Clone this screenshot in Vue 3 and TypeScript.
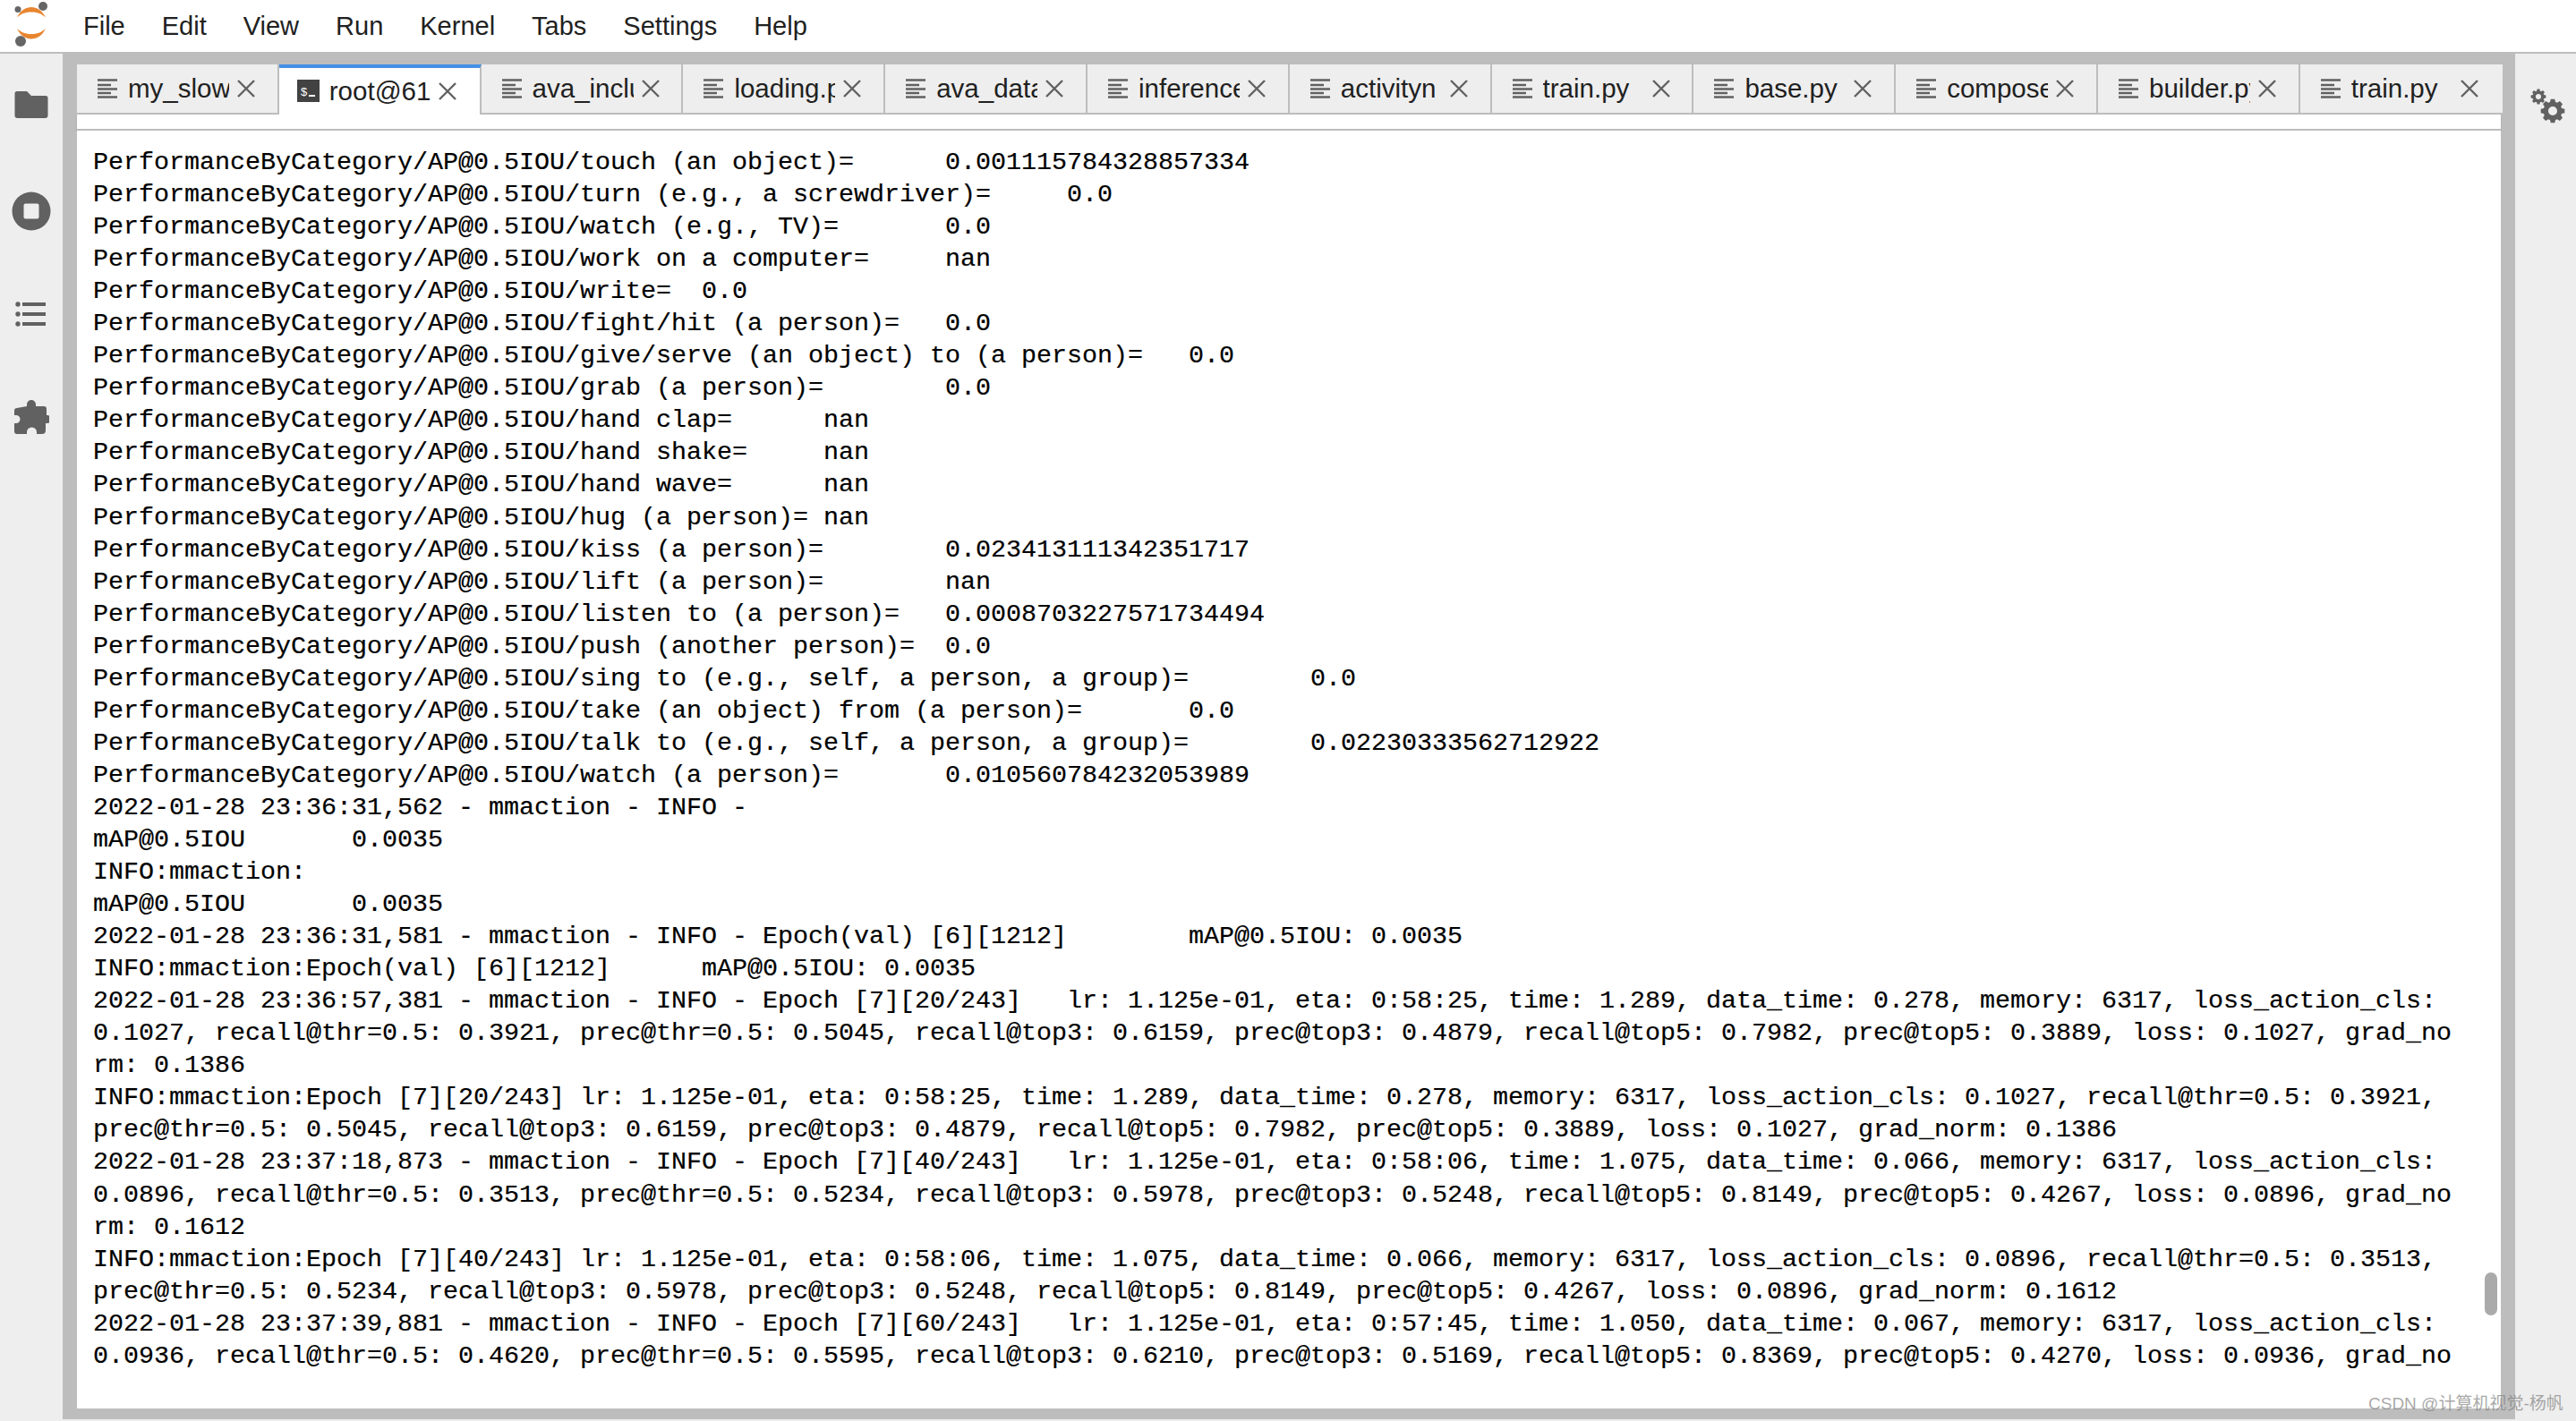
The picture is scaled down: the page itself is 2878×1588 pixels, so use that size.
<script setup lang="ts">
const menus: string[] = ['File', 'Edit', 'View', 'Run', 'Kernel', 'Tabs', 'Settings', 'Help']
const tabs: { label: string; terminal?: boolean }[] = [
  { label: 'my_slow' },
  { label: 'root@61d', terminal: true },
  { label: 'ava_include' },
  { label: 'loading.py' },
  { label: 'ava_dataset' },
  { label: 'inference.py' },
  { label: 'activityn' },
  { label: 'train.py' },
  { label: 'base.py' },
  { label: 'compose.py' },
  { label: 'builder.py' },
  { label: 'train.py' },
]

function gear(cx: number, cy: number, outer: number, inner: number, hole: number): string {
  const teeth = 8
  const pts: string[] = []
  for (let i = 0; i < teeth; i++) {
    const a = (i * Math.PI * 2) / teeth
    const s = Math.PI / teeth
    const at = (r: number, d: number): string =>
      `${(cx + r * Math.cos(a + d)).toFixed(2)} ${(cy + r * Math.sin(a + d)).toFixed(2)}`
    pts.push(at(inner, -s * 0.75), at(outer, -s * 0.42), at(outer, s * 0.42), at(inner, s * 0.75))
  }
  const ring = `M${cx - hole} ${cy}a${hole} ${hole} 0 1 0 ${hole * 2} 0a${hole} ${hole} 0 1 0 ${-hole * 2} 0Z`
  return `M${pts.join('L')}Z${ring}`
}
const smallGear = gear(9, 9, 8.5, 6.5, 3)
const bigGear = gear(25, 25, 13.5, 10.5, 5)

const p = 'PerformanceByCategory/AP@0.5IOU/'
const lines: string[] = [
  p + 'touch (an object)=\t0.001115784328857334',
  p + 'turn (e.g., a screwdriver)=\t0.0',
  p + 'watch (e.g., TV)=\t0.0',
  p + 'work on a computer=\tnan',
  p + 'write=\t0.0',
  p + 'fight/hit (a person)=\t0.0',
  p + 'give/serve (an object) to (a person)=\t0.0',
  p + 'grab (a person)=\t0.0',
  p + 'hand clap=\tnan',
  p + 'hand shake=\tnan',
  p + 'hand wave=\tnan',
  p + 'hug (a person)=\tnan',
  p + 'kiss (a person)=\t0.023413111342351717',
  p + 'lift (a person)=\tnan',
  p + 'listen to (a person)=\t0.0008703227571734494',
  p + 'push (another person)=\t0.0',
  p + 'sing to (e.g., self, a person, a group)=\t0.0',
  p + 'take (an object) from (a person)=\t0.0',
  p + 'talk to (e.g., self, a person, a group)=\t0.02230333562712922',
  p + 'watch (a person)=\t0.010560784232053989',
  '2022-01-28 23:36:31,562 - mmaction - INFO - ',
  'mAP@0.5IOU\t 0.0035',
  'INFO:mmaction:',
  'mAP@0.5IOU\t 0.0035',
  '2022-01-28 23:36:31,581 - mmaction - INFO - Epoch(val) [6][1212]\tmAP@0.5IOU: 0.0035',
  'INFO:mmaction:Epoch(val) [6][1212]\tmAP@0.5IOU: 0.0035',
  '2022-01-28 23:36:57,381 - mmaction - INFO - Epoch [7][20/243]\tlr: 1.125e-01, eta: 0:58:25, time: 1.289, data_time: 0.278, memory: 6317, loss_action_cls:',
  '0.1027, recall@thr=0.5: 0.3921, prec@thr=0.5: 0.5045, recall@top3: 0.6159, prec@top3: 0.4879, recall@top5: 0.7982, prec@top5: 0.3889, loss: 0.1027, grad_no',
  'rm: 0.1386',
  'INFO:mmaction:Epoch [7][20/243] lr: 1.125e-01, eta: 0:58:25, time: 1.289, data_time: 0.278, memory: 6317, loss_action_cls: 0.1027, recall@thr=0.5: 0.3921,',
  'prec@thr=0.5: 0.5045, recall@top3: 0.6159, prec@top3: 0.4879, recall@top5: 0.7982, prec@top5: 0.3889, loss: 0.1027, grad_norm: 0.1386',
  '2022-01-28 23:37:18,873 - mmaction - INFO - Epoch [7][40/243]\tlr: 1.125e-01, eta: 0:58:06, time: 1.075, data_time: 0.066, memory: 6317, loss_action_cls:',
  '0.0896, recall@thr=0.5: 0.3513, prec@thr=0.5: 0.5234, recall@top3: 0.5978, prec@top3: 0.5248, recall@top5: 0.8149, prec@top5: 0.4267, loss: 0.0896, grad_no',
  'rm: 0.1612',
  'INFO:mmaction:Epoch [7][40/243] lr: 1.125e-01, eta: 0:58:06, time: 1.075, data_time: 0.066, memory: 6317, loss_action_cls: 0.0896, recall@thr=0.5: 0.3513,',
  'prec@thr=0.5: 0.5234, recall@top3: 0.5978, prec@top3: 0.5248, recall@top5: 0.8149, prec@top5: 0.4267, loss: 0.0896, grad_norm: 0.1612',
  '2022-01-28 23:37:39,881 - mmaction - INFO - Epoch [7][60/243]\tlr: 1.125e-01, eta: 0:57:45, time: 1.050, data_time: 0.067, memory: 6317, loss_action_cls:',
  '0.0936, recall@thr=0.5: 0.4620, prec@thr=0.5: 0.5595, recall@top3: 0.6210, prec@top3: 0.5169, recall@top5: 0.8369, prec@top5: 0.4270, loss: 0.0936, grad_no',
]
</script>

<template>
  <div class="app">
    <header class="menubar">
      <svg class="logo" width="70" height="58" viewBox="0 0 70 58">
        <path d="M19 19.500C23 11.500 29 8 35 8s12 3.500 16 11.500C46 15 41 13.500 35 13.500S24 15 19 19.500Z" fill="#e8852f" />
        <path d="M19 32C23 40 29 43.500 35 43.500S47 40 51 32C46 36.500 41 38 35 38S24 36.500 19 32Z" fill="#e8852f" />
        <circle cx="20" cy="10.500" r="3.500" fill="#666" />
        <circle cx="48" cy="7" r="5" fill="#666" />
        <circle cx="23" cy="46" r="6" fill="#666" />
      </svg>
      <nav class="menus">
        <span v-for="m in menus" :key="m" class="menu">{{ m }}</span>
      </nav>
    </header>

    <div class="main">
      <aside class="side left">
        <svg class="ic folder" width="38" height="32" viewBox="0 0 38 32">
          <path d="M3 1h11l5 5h16a2.500 2.500 0 0 1 2.500 2.500V28a3 3 0 0 1-3 3H3.500a3 3 0 0 1-3-3V3.500A2.500 2.500 0 0 1 3 1Z" fill="#616161" />
        </svg>
        <svg class="ic stop" width="44" height="44" viewBox="0 0 44 44">
          <circle cx="22" cy="22" r="21.500" fill="#616161" />
          <rect x="13.500" y="13.500" width="17" height="17" rx="2" fill="#eee" />
        </svg>
        <svg class="ic list" width="36" height="28" viewBox="0 0 36 28">
          <circle cx="3" cy="3" r="2.700" fill="#616161" />
          <circle cx="3" cy="14" r="2.700" fill="#616161" />
          <circle cx="3" cy="25" r="2.700" fill="#616161" />
          <rect x="8" y="1" width="26" height="4" fill="#616161" />
          <rect x="8" y="12" width="26" height="4" fill="#616161" />
          <rect x="8" y="23" width="26" height="4" fill="#616161" />
        </svg>
        <svg class="ic puzzle" width="40" height="40" viewBox="0 0 40 40">
          <path d="M15 8V6a5 5 0 0 1 10 0v2h9a3 3 0 0 1 3 3v7h-1h2a4.500 4.500 0 0 1 0 9h-2v8a4 4 0 0 1-4 4h-6v-2a5 5 0 0 0-11 0v2H4a3 3 0 0 1-3-3v-9h2a4.500 4.500 0 0 0 0-9H1v-5a3 3 0 0 1 3-3Z" fill="#616161" />
        </svg>
      </aside>

      <section class="center">
        <div class="dock">
          <div class="tabbar">
            <div v-for="(t, i) in tabs" :key="i" class="tab" :class="{ active: t.terminal }">
              <svg v-if="t.terminal" class="tab-icon" width="25" height="25" viewBox="0 0 25 25">
                <rect width="25" height="25" fill="#424242" />
                <path d="M13 18h7" stroke="#fff" stroke-width="2" />
                <text x="4" y="18" font-size="13" fill="#fff" font-family="Liberation Sans, sans-serif">$</text>
              </svg>
              <svg v-else class="tab-icon" width="24" height="24" viewBox="0 0 24 24">
                <path d="M1 2.500h22M1 8h15M1 12.500h22M1 17h15M1 21.500h22" stroke="#616161" stroke-width="2.400" fill="none" />
              </svg>
              <span class="label">{{ t.label }}</span>
              <svg class="close" width="22" height="22" viewBox="0 0 22 22">
                <path d="M2 2l18 18M20 2L2 20" stroke="#616161" stroke-width="2.400" fill="none" />
              </svg>
            </div>
          </div>
          <div class="toolbar"></div>
          <div class="term">
            <div v-for="(l, i) in lines" :key="i" class="line">{{ l }}</div>
            <div class="thumb"></div>
          </div>
        </div>
      </section>

      <aside class="side right">
        <svg class="gears" width="40" height="40" viewBox="0 0 40 40">
          <path :d="smallGear" fill="#616161" fill-rule="evenodd" />
          <path :d="bigGear" fill="#616161" fill-rule="evenodd" />
        </svg>
      </aside>
    </div>
    <div class="status"></div>
    <div class="mark">CSDN @计算机视觉-杨帆</div>
  </div>
</template>

<style>
html, body { margin: 0; padding: 0; background: #eee; }
</style>

<style scoped>
.app {
  position: relative;
  width: 2878px;
  height: 1588px;
  display: flex;
  flex-direction: column;
  overflow: hidden;
  font-family: "Liberation Sans", Arial, sans-serif;
}
.menubar {
  height: 58px;
  flex: none;
  display: flex;
  align-items: center;
  background: #fff;
}
.logo { flex: none; }
.menus { display: flex; margin-left: 23px; }
.menu {
  font-size: 29px;
  color: #212121;
  margin-right: 41px;
  line-height: 58px;
}
.main {
  flex: 1;
  min-height: 0;
  display: flex;
  border-top: 2px solid #bdbdbd;
}
.side {
  flex: none;
  background: #eee;
  position: relative;
}
.left {
  width: 70px;
  display: flex;
  flex-direction: column;
  align-items: center;
}
.ic { display: block; flex: none; }
.folder { margin-top: 41px; margin-left: -1px; }
.stop { margin-top: 81px; }
.list { margin-top: 79px; margin-left: -1px; }
.puzzle { margin-top: 81px; margin-left: -1px; }
.right { width: 68px; }
.gears { display: block; margin: 39px 0 0 17px; }
.center {
  flex: 1;
  min-width: 0;
  background: #bdbdbd;
  padding: 12px 16px 12px 16px;
  display: flex;
}
.dock {
  flex: 1;
  min-width: 0;
  display: flex;
  flex-direction: column;
  background: #fff;
}
.tabbar {
  height: 56px;
  flex: none;
  display: flex;
  background: #eee;
}
.tab {
  width: 225.8px;
  box-sizing: border-box;
  flex: none;
  display: flex;
  align-items: center;
  padding-left: 22px;
  background: #eee;
  border-right: 2px solid #bdbdbd;
  border-bottom: 2px solid #bdbdbd;
}
.tab:last-child { border-right: 0; }
.tab.active {
  background: #fff;
  border-top: 4px solid #4490e6;
  border-bottom: 0;
  padding-left: 20px;
}
.tab-icon { flex: none; }
.active .tab-icon { margin-top: -2px; }
.label {
  width: 113px;
  flex: none;
  margin-left: 11px;
  overflow: hidden;
  white-space: nowrap;
  font-size: 29.5px;
  color: #212121;
  line-height: 40px;
}
.close { flex: none; margin-left: 8px; }
.toolbar {
  height: 16px;
  flex: none;
  background: #fff;
  border-bottom: 2px solid #bdbdbd;
  box-shadow: 0 1px 2px rgba(0, 0, 0, 0.12);
}
.term {
  flex: 1;
  min-height: 0;
  position: relative;
  overflow: hidden;
  background: #fff;
  padding: 18px 0 0 18px;
  font-family: "Liberation Mono", monospace;
  font-size: 28.33px;
  line-height: 36.05px;
  color: #000;
  -webkit-text-stroke: 0.2px #000;
}
.line {
  height: 36.05px;
  white-space: pre;
  tab-size: 8;
}
.thumb {
  position: absolute;
  left: 2690px;
  top: 1276px;
  width: 14px;
  height: 48px;
  border-radius: 7px;
  background: #aaa;
}
.status { height: 2px; flex: none; background: #eee; }
.mark {
  position: absolute;
  left: 2646px;
  top: 1557px;
  font-size: 19px;
  line-height: 24px;
  color: rgba(130, 130, 130, 0.7);
  font-family: "Liberation Sans", "Noto Sans CJK SC", sans-serif;
  white-space: nowrap;
}
</style>
